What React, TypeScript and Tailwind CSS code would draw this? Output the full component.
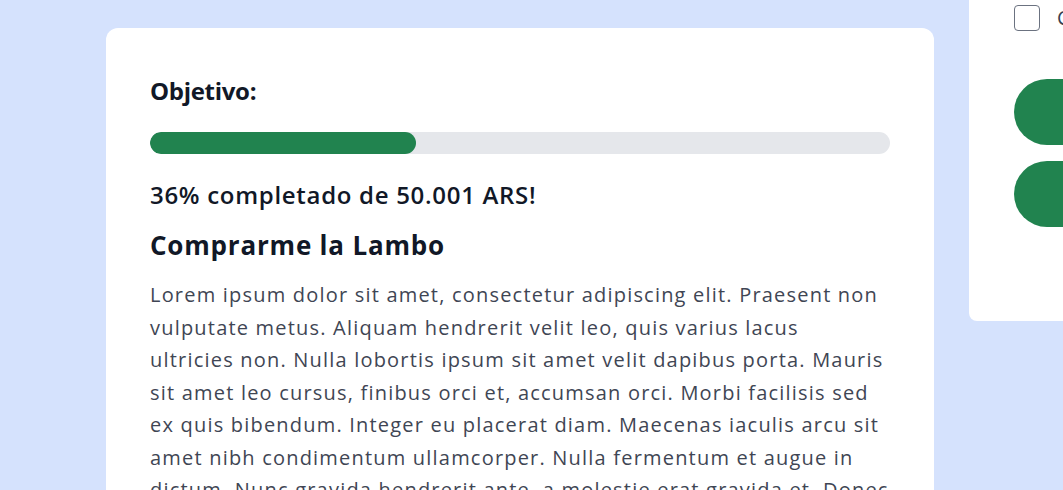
const descriptionLines = [
  'Lorem ipsum dolor sit amet, consectetur adipiscing elit. Praesent non',
  'vulputate metus. Aliquam hendrerit velit leo, quis varius lacus',
  'ultricies non. Nulla lobortis ipsum sit amet velit dapibus porta. Mauris',
  'sit amet leo cursus, finibus orci et, accumsan orci. Morbi facilisis sed',
  'ex quis bibendum. Integer eu placerat diam. Maecenas iaculis arcu sit',
  'amet nibh condimentum ullamcorper. Nulla fermentum et augue in',
  'dictum. Nunc gravida hendrerit ante, a molestie erat gravida et. Donec',
];

export default function App() {
  const progress = 36;

  return (
    <div
      className="w-[1063px] h-[490px] overflow-hidden bg-[#d5e2fd] flex items-start gap-[35px] pl-[106px]"
      style={{ fontFamily: '"Open Sans", "Liberation Sans", sans-serif' }}
    >
      {/* Main card */}
      <div className="mt-[28px] w-[828px] shrink-0 bg-white rounded-xl px-[44px] pt-[47px] pb-10">
        <h3 className="text-[24px] leading-[32px] font-bold tracking-[-0.3px] text-[#111827]">Objetivo:</h3>

        <div className="mt-[25px] h-[22px] w-full rounded-full bg-[#e5e7eb] overflow-hidden">
          <div className="h-full rounded-full bg-[#21834f]" style={{ width: `${progress}%` }} />
        </div>

        <p className="mt-[25px] text-[24px] leading-[32px] font-semibold tracking-[0.7px] text-[#111827]">
          {progress}% completado de 50.001 ARS!
        </p>

        <h2 className="mt-[17px] text-[26px] leading-[34px] font-bold tracking-[0.8px] text-[#111827]">
          Comprarme la Lambo
        </h2>

        <p className="mt-[17px] text-[20px] leading-[32.5px] tracking-[1.2px] text-[#3f4654] whitespace-nowrap">
          {descriptionLines.map((line, i) => (
            <span key={i} className="block">
              {line}
            </span>
          ))}
        </p>
      </div>

      {/* Sidebar card */}
      <div className="mt-[-20px] w-[400px] shrink-0 bg-white rounded-lg pl-[45px] pt-[25px] pb-[94px]">
        <label className="flex items-center gap-[17px] whitespace-nowrap">
          <span className="w-[26px] h-[26px] shrink-0 rounded-[4px] border-[1.5px] border-[#6b7280] bg-white" />
          <span className="text-[20px] leading-[26px] text-[#374151]">Colaborar de forma anónima</span>
        </label>

        <div className="mt-[48px] flex flex-col gap-[16px]">
          <button className="h-[66px] w-[340px] rounded-full bg-[#21834f] text-white text-xl font-semibold">
            Donar
          </button>
          <button className="h-[66px] w-[340px] rounded-full bg-[#21834f] text-white text-xl font-semibold">
            Compartir
          </button>
        </div>
      </div>
    </div>
  );
}
